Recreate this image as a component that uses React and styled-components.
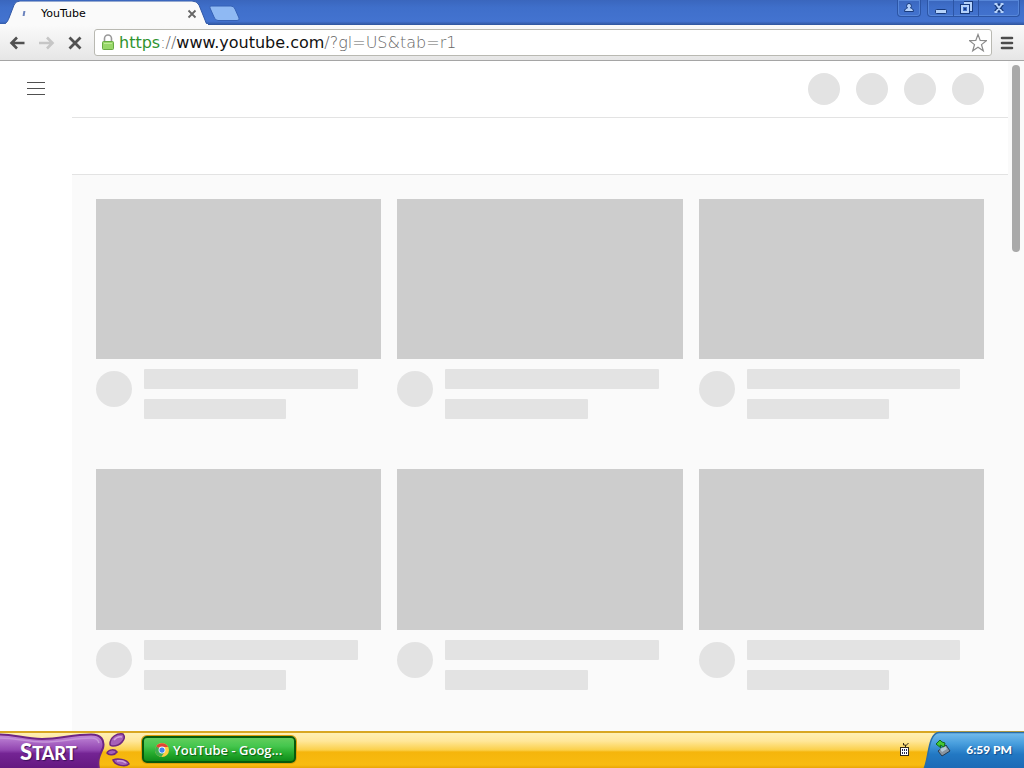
import React, { useState } from "react";
import styled, { createGlobalStyle } from "styled-components";

const GlobalStyle = createGlobalStyle`
  * { box-sizing: border-box; }
  html, body { margin: 0; height: 100%; }
  #root { height: 100%; }
  body { font-family: "DejaVu Sans", Verdana, sans-serif; background: #fff; overflow: hidden; }
  button { font: inherit; padding: 0; border: 0; background: none; color: inherit; }
  svg { display: block; }
`;

const Desktop = styled.div`
  display: flex;
  flex-direction: column;
  height: 100vh;
`;

const TitleBar = styled.header`
  display: flex;
  align-items: flex-end;
  height: 25px;
  flex: none;
  background: linear-gradient(#3a66bd 0, #3f6fca 30%, #4373d0 85%, #2f549c 100%);
`;

const Tab = styled.div`
  position: relative;
  display: flex;
  align-items: center;
  width: 208px;
  height: 24px;
  padding: 1px 10px 0 22px;
`;

const TabShape = styled.svg`
  position: absolute;
  inset: 0;
`;

const TabBody = styled.div`
  position: relative;
  display: flex;
  align-items: center;
  flex: 1;
`;

const Spinner = styled.span`
  width: 2px;
  height: 5px;
  margin: 0 16px 0 1px;
  background: #6b83bd;
  transform: skewX(-10deg);
`;

const TabTitle = styled.span`
  flex: 1;
  font-size: 11px;
  line-height: 16px;
  color: #000;
`;

const TabClose = styled.button`
  width: 12px;
  height: 12px;
`;

const NewTab = styled.button`
  width: 34px;
  height: 24px;
`;

const WindowButtons = styled.div`
  display: flex;
  align-self: flex-start;
  margin-left: auto;
  padding-right: 4px;
  gap: 6px;
`;

const ButtonGroup = styled.div`
  display: flex;
  height: 17px;
  border: 1px solid #2c55a5;
  border-top: 0;
  border-radius: 0 0 4px 4px;
  box-shadow: inset 0 0 0 1px #5686d8;
`;

const WindowButton = styled.button`
  display: flex;
  align-items: center;
  justify-content: center;
  width: ${(p) => p.$width}px;
  height: 16px;
  & + & { border-left: 1px solid #2c55a5; }
`;

const Toolbar = styled.nav`
  display: flex;
  align-items: center;
  flex: none;
  height: 36px;
  padding: 0 10px 0 7px;
  background: linear-gradient(#fafafa, #e6e6e6);
  border-bottom: 1px solid #a5a5a5;
`;

const NavButton = styled.button`
  width: 20px;
  height: 20px;
  margin-right: 9px;
`;

const MenuButton = styled.button`
  width: 14px;
  height: 14px;
  margin-left: 8px;
`;

const AddressBar = styled.div`
  display: flex;
  align-items: center;
  flex: 1;
  height: 27px;
  padding: 0 4px 0 6px;
  background: #fff;
  border: 1px solid #b9b9b2;
  border-radius: 3px;
`;

const AddressField = styled.div`
  position: relative;
  flex: 1;
  margin-left: 4px;
  padding-top: 1px;
  font-size: 16px;
  line-height: 24px;
  font-weight: 200;
  color: #666;
  white-space: nowrap;
`;

const AddressInput = styled.input`
  position: absolute;
  inset: 0;
  width: 100%;
  padding: 0;
  border: 0;
  outline: 0;
  background: transparent;
  font: inherit;
  color: #000;
`;

const Scheme = styled.span`
  font-weight: 400;
  color: #2f932f;
`;

const Host = styled.span`
  font-weight: 400;
  color: #111;
`;

const StarButton = styled.button`
  width: 18px;
  height: 20px;
`;

const Viewport = styled.div`
  display: flex;
  flex: 1;
  min-height: 0;
  background: #fff;
`;

const Guide = styled.aside`
  width: 72px;
  flex: none;
  padding: 15px 24px;
`;

const GuideButton = styled.button`
  width: 24px;
  height: 24px;
`;

const Main = styled.main`
  flex: 1;
  min-width: 0;
  display: flex;
  flex-direction: column;
`;

const Masthead = styled.div`
  display: flex;
  align-items: center;
  justify-content: flex-end;
  gap: 16px;
  flex: none;
  height: 57px;
  padding-right: 24px;
  border-bottom: 1px solid #e3e3e3;
`;

const ChipBar = styled.div`
  flex: none;
  height: 57px;
  border-bottom: 1px solid #e3e3e3;
`;

const Circle = styled.div`
  flex: none;
  width: ${(p) => p.$size}px;
  height: ${(p) => p.$size}px;
  border-radius: 50%;
  background: #e3e3e3;
`;

const Feed = styled.div`
  flex: 1;
  min-height: 0;
  overflow: hidden;
  display: grid;
  grid-template-columns: repeat(3, 1fr);
  align-content: start;
  gap: 50px 16px;
  padding: 24px;
  background: #fafafa;
`;

const Card = styled.article`
  min-width: 0;
`;

const Thumbnail = styled.div`
  padding-top: 56.2%;
  background: #cdcdcd;
`;

const Details = styled.div`
  display: flex;
  gap: 12px;
  padding-top: 10px;
  & > ${Circle} { margin-top: 2px; }
`;

const Lines = styled.div`
  flex: 1;
  display: flex;
  flex-direction: column;
  gap: 10px;
`;

const Line = styled.div`
  width: ${(p) => (p.$short ? "60%" : "90%")};
  height: 20px;
  border-radius: 1px;
  background: #e3e3e3;
`;

const ScrollTrack = styled.div`
  width: 16px;
  flex: none;
  padding: 4px;
  background: #fafafa;
`;

const ScrollThumb = styled.div`
  height: 28.2%;
  border-radius: 4px;
  background: #a9a9a9;
`;

const Taskbar = styled.footer`
  display: flex;
  flex: none;
  height: 37px;
  background: linear-gradient(#d8a722 0 2px, #fff0b4 2px, #ffe79a 10px, #fbd04a 19px, #f5b50c 21px, #f8bc10 34px, #e9a506 37px);
`;

const StartButton = styled.button`
  position: relative;
  width: 132px;
  height: 37px;
  text-align: left;
`;

const StartShape = styled.svg`
  position: absolute;
  inset: 0;
`;

const StartText = styled.span`
  position: relative;
  display: block;
  padding: 5px 0 0 20px;
  font-family: Lato, sans-serif;
  font-weight: 900;
  font-size: 18px;
  line-height: 28px;
  color: #fff;
  text-shadow: 1px 1px 1px #3a1058;
  &::first-letter { font-size: 22px; }
`;

const TaskButton = styled.button`
  display: flex;
  align-items: center;
  gap: 4px;
  width: 154px;
  height: 27px;
  margin: 5px 0 0 10px;
  padding: 1px 8px 0 11px;
  border: 2px solid #08590c;
  border-radius: 5px;
  box-shadow: 0 0 0 1px #dd9d0a;
  background: linear-gradient(#62ce5c 0, #45c64e 35%, #27ac2e 65%, #0f8c1a 100%);
  font-family: "Open Sans", sans-serif;
  font-weight: 600;
  font-size: 13px;
  color: #fff;
  text-shadow: 1px 1px 1px #0a5d12;
  white-space: nowrap;
`;

const TrayIcon = styled.div`
  width: 12px;
  margin: 12px 11px 0 auto;
`;

const Tray = styled.div`
  position: relative;
  width: 102px;
`;

const TrayShape = styled.svg`
  position: absolute;
  inset: 0;
`;

const Clock = styled.time`
  position: relative;
  display: block;
  padding: 5px 12px 0 0;
  text-align: right;
  font-family: Lato, sans-serif;
  font-weight: 900;
  font-size: 12px;
  line-height: 28px;
  color: #fff;
  text-shadow: 1px 1px 1px #124d8c;
`;

const URL_TEXT = "https://www.youtube.com/?gl=US&tab=r1";

function Address() {
  const [editing, setEditing] = useState(false);
  const [value, setValue] = useState(URL_TEXT);
  return (
    <AddressField>
      {!editing && (
        <>
          <Scheme>https</Scheme>://<Host>www.youtube.com</Host>/?gl=US&amp;tab=r1
        </>
      )}
      <AddressInput
        aria-label="Address"
        value={editing ? value : ""}
        onFocus={() => setEditing(true)}
        onBlur={() => setEditing(false)}
        onChange={(e) => setValue(e.target.value)}
      />
    </AddressField>
  );
}

function VideoCard() {
  return (
    <Card>
      <Thumbnail />
      <Details>
        <Circle $size={36} />
        <Lines>
          <Line />
          <Line $short />
        </Lines>
      </Details>
    </Card>
  );
}

export default function App() {
  return (
    <Desktop>
      <GlobalStyle />
      <TitleBar>
        <Tab>
          <TabShape width="208" height="24" viewBox="0 0 208 24">
            <path d="M0 24C5 24 7 22 9 17L14 4Q15.500 0 20 0H192Q197 0 199 4L205 19Q206 23 208 24Z" fill="#fafafa" stroke="#3158a6" strokeWidth="1" />
            <path d="M0 23.500H208" stroke="#fafafa" />
          </TabShape>
          <TabBody>
            <Spinner />
            <TabTitle>YouTube</TabTitle>
            <TabClose aria-label="Close tab">
              <svg width="12" height="12" viewBox="0 0 12 12"><path d="M2.500 2.500L9.500 9.500M9.500 2.500L2.500 9.500" stroke="#666" strokeWidth="1.800" /></svg>
            </TabClose>
          </TabBody>
        </Tab>
        <NewTab aria-label="New tab">
          <svg width="34" height="24" viewBox="0 0 34 24"><path d="M3 5H23Q26 5 27 8L31 17Q32 19.500 29 19.500H10Q7 19.500 6 16L2 7Q1 5 3 5Z" fill="#8fb9f3" stroke="#3560b4" /></svg>
        </NewTab>
        <WindowButtons>
          <ButtonGroup>
            <WindowButton $width={22} aria-label="User">
              <svg width="12" height="12" viewBox="0 0 12 12"><path d="M6 1.500A2.200 2.500 0 0 1 7.500 6C9 6.500 10.500 7 10.500 9.500H1.500C1.500 7 3 6.500 4.500 6A2.200 2.500 0 0 1 6 1.500Z" fill="#b5d2fa" stroke="#183b7d" /></svg>
            </WindowButton>
          </ButtonGroup>
          <ButtonGroup>
            <WindowButton $width={25} aria-label="Minimize">
              <svg width="14" height="14" viewBox="0 0 14 14"><rect x="1.500" y="8.500" width="11" height="4" rx="1" fill="#b5d2fa" stroke="#183b7d" /></svg>
            </WindowButton>
            <WindowButton $width={25} aria-label="Restore">
              <svg width="14" height="14" viewBox="0 0 14 14" fill="none">
                <path d="M5 2H12V9H9" stroke="#183b7d" strokeWidth="4" /><path d="M5 2H12V9H9" stroke="#b5d2fa" strokeWidth="2" />
                <path d="M3 5H9V11H3Z" stroke="#183b7d" strokeWidth="4" /><path d="M3 5H9V11H3Z" fill="#3e6cc4" stroke="#b5d2fa" strokeWidth="2" />
                <path d="M5 7H7V9H5Z" fill="#183b7d" />
              </svg>
            </WindowButton>
            <WindowButton $width={41} aria-label="Close">
              <svg width="12" height="12" viewBox="0 0 12 12"><path d="M3 2L9 10M9 2L3 10" stroke="#183b7d" strokeWidth="4.500" /><path d="M3 2L9 10M9 2L3 10M1.500 2H4.500M7.500 2H10.500M1.500 10H4.500M7.500 10H10.500" stroke="#b5d2fa" strokeWidth="2" /></svg>
            </WindowButton>
          </ButtonGroup>
        </WindowButtons>
      </TitleBar>
      <Toolbar>
        <NavButton aria-label="Back">
          <svg width="20" height="20" viewBox="0 0 20 20" fill="none" stroke="#505050" strokeWidth="2.600"><path d="M17.500 10H5M10 4.500L4.500 10L10 15.500" /></svg>
        </NavButton>
        <NavButton aria-label="Forward">
          <svg width="20" height="20" viewBox="0 0 20 20" fill="none" stroke="#c6c6c6" strokeWidth="2.600"><path d="M3 10H16M11 4.500L16.500 10L11 15.500" /></svg>
        </NavButton>
        <NavButton aria-label="Stop">
          <svg width="20" height="20" viewBox="0 0 20 20" stroke="#505050" strokeWidth="2.800"><path d="M4.500 4.500L15.500 15.500M15.500 4.500L4.500 15.500" /></svg>
        </NavButton>
        <AddressBar>
          <svg width="14" height="17" viewBox="0 0 14 17">
            <path d="M3.500 8V4.500A3.500 3.500 0 0 1 10.500 4.500V8" fill="none" stroke="#999" strokeWidth="1.600" />
            <rect x="1.500" y="7.500" width="11" height="8" rx="1" fill="#98d769" stroke="#68aa42" />
            <path d="M3 9.500H11" stroke="#c0eb99" />
          </svg>
          <Address />
          <StarButton aria-label="Bookmark">
            <svg width="18" height="20" viewBox="0 0 18 20"><path d="M9 1.500L11.200 7.500L17.500 7.700L12.500 11.600L14.300 17.800L9 14.200L3.700 17.800L5.500 11.600L.500 7.700L6.800 7.500Z" fill="#fff" stroke="#8a8a8a" strokeWidth="1.200" /></svg>
          </StarButton>
        </AddressBar>
        <MenuButton aria-label="Menu">
          <svg width="14" height="14" viewBox="0 0 14 14" stroke="#4c4c4c" strokeWidth="2.600" strokeLinecap="round"><path d="M2 2H12M2 7H12M2 12H12" /></svg>
        </MenuButton>
      </Toolbar>
      <Viewport>
        <Guide>
          <GuideButton aria-label="Guide">
            <svg width="24" height="24" viewBox="0 0 24 24" fill="#505050"><path d="M3 6H21V7H3ZM3 12H21V13H3ZM3 18H21V19H3Z" /></svg>
          </GuideButton>
        </Guide>
        <Main>
          <Masthead>
            {[0, 1, 2, 3].map((i) => <Circle key={i} $size={32} />)}
          </Masthead>
          <ChipBar />
          <Feed>
            {[0, 1, 2, 3, 4, 5].map((i) => <VideoCard key={i} />)}
          </Feed>
        </Main>
        <ScrollTrack><ScrollThumb /></ScrollTrack>
      </Viewport>
      <Taskbar>
        <StartButton>
          <StartShape width="132" height="37" viewBox="0 0 132 37">
            <defs>
              <linearGradient id="plum" x1="0" y1="0" x2="0" y2="1">
                <stop offset="0" stopColor="#c48bdb" /><stop offset=".45" stopColor="#9145b0" /><stop offset=".55" stopColor="#742494" /><stop offset="1" stopColor="#64187f" />
              </linearGradient>
            </defs>
            <path d="M-2 3.500C14 3 24 8 42 8C60 8 72 3.500 91 3.500C101 3.500 105 9 103 17C100 24 97 28 99 38H-2Z" fill="url(#plum)" stroke="#6d2584" strokeWidth="2" />
            <path d="M0 7C17 7 27 11 43 11C61 11 75 7 91 7Q98 7 99 12" fill="none" stroke="#c594d8" strokeWidth="1.500" />
            <g fill="#a560b8" stroke="#6e287f" strokeWidth="1.500">
              <path d="M110 13C110 6 117 2 123 3C127 8 120 15 113 15Q110 15 110 13Z" />
              <path d="M107 22C109 18 115 18 117 21C115 24 109 25 107 22Z" />
              <path d="M113 29C117 27 127 28 129 33C126 36 115 35 113 29Z" />
            </g>
            <path d="M114 9Q117 5 122 6M117 30Q122 29 126 32" fill="none" stroke="#d2a2df" strokeWidth="1.500" />
          </StartShape>
          <StartText>START</StartText>
        </StartButton>
        <TaskButton>
          <svg width="14" height="14" viewBox="0 0 16 16">
            <circle cx="8" cy="8" r="8" fill="#ffce43" />
            <path d="M8 8L1.200 3.800A8 8 0 0 1 15 4.500H8Z" fill="#e04536" />
            <path d="M8 8L1.200 3.800A8 8 0 0 0 7.300 16L11 10Z" fill="#3fae50" />
            <circle cx="8" cy="8" r="3.900" fill="#fff" /><circle cx="8" cy="8" r="3" fill="#4182ee" />
          </svg>
          YouTube - Goog...
        </TaskButton>
        <TrayIcon>
          <svg width="12" height="14" viewBox="0 0 12 14">
            <path d="M4.500 0V2H6.500V4M9.500 0L6.500 3" fill="none" stroke="#33291b" />
            <rect x="1.500" y="4.500" width="8" height="8" fill="#fff" stroke="#33291b" />
            <path d="M3 6H4V8H3ZM5 6H6V8H5ZM7 6H8V8H7ZM3 9H4V11H3ZM5 9H6V11H5ZM7 9H8V11H7Z" fill="#272a56" />
          </svg>
        </TrayIcon>
        <Tray>
          <TrayShape width="102" height="37" viewBox="0 0 102 37">
            <defs>
              <linearGradient id="sea" x1="0" y1="0" x2="0" y2="1">
                <stop offset="0" stopColor="#75bdec" /><stop offset=".3" stopColor="#489edd" /><stop offset=".6" stopColor="#2278c3" /><stop offset="1" stopColor="#1c69b5" />
              </linearGradient>
            </defs>
            <path d="M2 38C7 27 6 2 17 1.500H104V38Z" fill="url(#sea)" stroke="#286da9" strokeWidth="1.500" />
            <path d="M16 20L24 14L28 20L20 25Z" fill="#8a949e" stroke="#253b51" />
            <path d="M18 18L23 15L25 18L20 21Z" fill="#b5cbd9" />
            <path d="M14 13L18 9L20 11L23 12L22 16L18 14L19 17Z" fill="#45c934" stroke="#116b1b" />
          </TrayShape>
          <Clock>6:59 PM</Clock>
        </Tray>
      </Taskbar>
    </Desktop>
  );
}
